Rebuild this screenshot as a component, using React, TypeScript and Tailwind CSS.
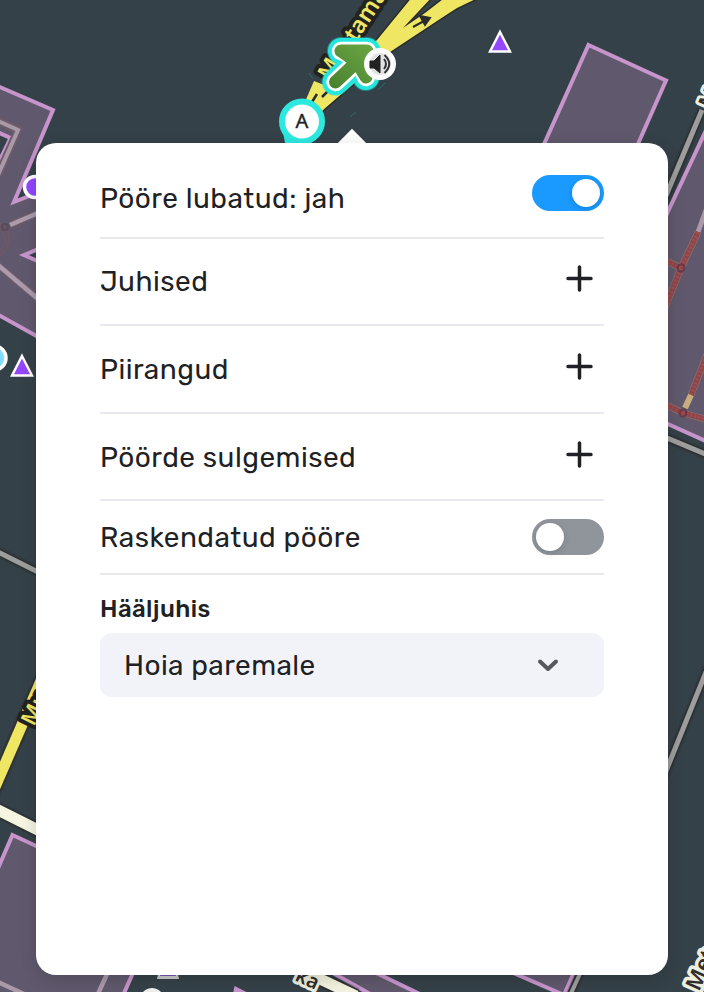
import React from "react";

function Triangle({ x, y }: { x: number; y: number }) {
  return (
    <path
      d={`M${x} ${y + 3}L${x + 10} ${y + 22.5}H${x - 10}Z`}
      fill="#9546ff"
      stroke="#fff"
      strokeWidth="2.4"
    />
  );
}

function Road({ d, w = 5, color = "#9d9d9d", casing = "#2b2e2f" }: { d: string; w?: number; color?: string; casing?: string }) {
  return (
    <g fill="none">
      <path d={d} stroke={casing} strokeWidth={w + 6} opacity="0.3" />
      <path d={d} stroke={casing} strokeWidth={w + 3} opacity="0.7" />
      <path d={d} stroke={color} strokeWidth={w} />
    </g>
  );
}

function Track({ d }: { d: string }) {
  return (
    <g fill="none">
      <path d={d} stroke="#8c6a66" strokeWidth="7" />
      <path d={d} stroke="#7a4650" strokeWidth="5" />
      <path d={d} stroke="#a04a4d" strokeWidth="4" strokeDasharray="3 1" />
    </g>
  );
}

function StreetMap() {
  const building = { fill: "#60586c", stroke: "#c794cb", strokeWidth: 4 };
  const yellowLabel = {
    fill: "#efe663",
    stroke: "#222321",
    strokeWidth: 8,
    paintOrder: "stroke",
    strokeLinejoin: "round" as const,
    fontWeight: 600,
    fontSize: 22,
  };
  const creamLabel = {
    fill: "#2e2e2c",
    stroke: "#eeeedd",
    strokeWidth: 6,
    paintOrder: "stroke",
    strokeLinejoin: "round" as const,
    fontWeight: 600,
    fontSize: 22,
  };
  return (
    <svg className="absolute inset-0 font-['Noto_Sans',sans-serif]" width="704" height="992" viewBox="0 0 704 992">
      <defs>
        <linearGradient id="leaf" gradientUnits="userSpaceOnUse" x1="335" y1="88" x2="372" y2="45">
          <stop offset="0" stopColor="#4a832f" />
          <stop offset="1" stopColor="#6ba644" />
        </linearGradient>
      </defs>
      <rect width="704" height="992" fill="#354148" />

      {/* west building */}
      <path d="M-5 85L53 110L14 202L60 184V240L24 255L60 271V349L-5 313Z" {...building} />
      <path d="M-5 131L10.500 138L-4 168Z" fill="#354148" stroke="#c794cb" strokeWidth="4" />
      <g fill="none">
        <path d="M-2 121L18 130L-2 175" stroke="#6e5c69" strokeWidth="8" />
        <path d="M-2 121L18 130L-2 175" stroke="#a999a9" strokeWidth="4" />
        <path d="M10 225L38 213M-2 265L38 299" stroke="#6e5c69" strokeWidth="7" />
        <path d="M10 225L38 213M-2 265L38 299" stroke="#ab9bad" strokeWidth="4.500" />
        <circle cx="-9" cy="239" r="18" stroke="#6f5763" strokeWidth="2" />
        <circle cx="-9" cy="239" r="14" stroke="#6f5763" strokeWidth="1.500" />
        <circle cx="5" cy="227" r="3" stroke="#513f4e" strokeWidth="2" opacity="0.6" />
      </g>
      <circle cx="35" cy="187" r="10.500" fill="#9546ff" stroke="#fff" strokeWidth="3.500" />
      <circle cx="-6" cy="358" r="12" fill="#80dcff" stroke="#fff" strokeWidth="3.500" />
      <Triangle x={22} y={353} />

      {/* north-east and east buildings */}
      <path d="M588.500 45L666 80.500L630 162H536Z" {...building} />
      <Road d="M702 110L660 210" />
      <path d="M708 126L650 250V416L708 442V126Z" {...building} />
      <path d="M708 205L698 232" stroke="#a999a9" strokeWidth="5" />
      <Track d="M698 232L681 268L664 310" />
      <Track d="M664 260L681 268" />
      <Track d="M708 352L691 395" />
      <path d="M691 395L685 408" stroke="#c8ad7e" strokeWidth="6" />
      <Track d="M664 404L683 413L708 420" />
      <g fill="none" stroke="#5c2f40" strokeWidth="2" opacity="0.7">
        <circle cx="681" cy="268" r="3.500" />
        <circle cx="683" cy="413" r="3.500" />
      </g>
      <Road d="M660 435L710 456" />
      <text transform="translate(712 110) rotate(-67)" {...creamLabel}>M</text>
      <Road d="M708 667L660 786" />

      {/* western roads */}
      <Road d="M-4 551L44 575" />
      <Road d="M44 674L-8 794" w={11} color="#efe663" />
      <text transform="translate(34 727) rotate(-64)" {...yellowLabel}>Mu</text>
      <Road d="M-6 808L50 836" w={11} color="#f5f5e2" />
      <path d="M12.500 835L163 905L121 1000H-8V882Z" {...building} />
      <g stroke="#a999a9" strokeWidth="4.500">
        <path d="M-2 982L24 994M108 972L97 996" />
      </g>
      <path d="M159 970H177L179 979H157Z" fill="#c8cbcb" />
      <path d="M162 970H174L176 976H160Z" fill="#7950b4" />
      <circle cx="152" cy="1000" r="12" fill="#eee" />

      {/* southern edge */}
      <path d="M233 1004L236 989L262 1002Z" {...building} />
      <path d="M324 968L372 995L426 997L370 970Z" {...building} />
      <path d="M502 968L564 995L576 968Z" {...building} />
      <Road d="M584 965L568 1000" w={4} />
      <Road d="M280 960L356 996" w={11} color="#f3f3df" />
      <text transform="translate(294 980) rotate(25)" {...creamLabel} fontSize={20}>ka</text>
      <path d="M710 972L698 998H712Z" {...building} />
      <text transform="translate(699 992) rotate(-66)" {...creamLabel} strokeWidth={7}>Met</text>

      {/* main road with fork */}
      <path
        d="M377 40L413 -4H433L403 28L425 13L447 -4H482L457 8L440 19L390 52L323 110L300 146L289 143L304 103Z"
        fill="#efe663"
        stroke="#292c29"
        strokeWidth="3"
        paintOrder="stroke"
      />
      <path d="M413 27L424 21M420 16L430 18L425 25Z" fill="#292c29" stroke="#292c29" strokeWidth="2" />
      <text transform="translate(330 81) rotate(-60)" {...yellowLabel}>M</text>
      <path d="M304 104L314 81L332 88L323 110Z" fill="#efe663" />
      <path d="M312 102L317 94M322 97L330 89" stroke="#292c29" strokeWidth="2.500" />
      <text transform="translate(356 43) rotate(-57)" {...yellowLabel} fontSize={23}>tamäe</text>
      <path d="M309 73L313 79M378 90L385 83M350 117L356 112" stroke="#267f83" strokeWidth="1" opacity="0.7" />

      {/* turn arrow */}
      <g fill="none" strokeLinecap="round" strokeLinejoin="round">
        <path d="M335.500 82L360 59M341 51H367L366 77M341 51L360 59L366 77" stroke="#24e6df" strokeWidth="28" opacity="0.4" />
        <path d="M335.500 82L360 59M341 51H367L366 77M341 51L360 59L366 77" stroke="#24e6df" strokeWidth="26" />
        <path d="M335.500 82L360 59M341 51H367L366 77M341 51L360 59L366 77" stroke="#fff" strokeWidth="18.500" />
        <path d="M335.500 82L360 59M341 51H367L366 77L357 62Z" stroke="url(#leaf)" strokeWidth="13" />
        <path d="M341 51H367L366 77L357 62Z" fill="url(#leaf)" />
      </g>

      {/* voice badge */}
      <circle cx="380" cy="64" r="16" fill="#fff" />
      <circle cx="380" cy="64" r="11" fill="#b8b8b8" opacity="0.4" />
      <path d="M370 61H374L380 55V73L374 68H370Z" fill="#222" stroke="#222" strokeLinejoin="round" />
      <path d="M384 59Q388 64 384 69M384.500 55Q394 64 384.500 73" fill="none" stroke="#333" strokeWidth="2" />

      {/* node A */}
      <path d="M283 132L286 148H306L318 136Z" fill="#2ce8df" />
      <circle cx="302" cy="121.500" r="20" fill="#fff" stroke="#2ce8df" strokeWidth="6" />
      <text x="302" y="128" textAnchor="middle" fontSize="20" fill="#202124" stroke="#202124" strokeWidth="0.400">A</text>
      <Triangle x={500} y={29} />
    </svg>
  );
}

function Toggle({ on }: { on: boolean }) {
  return (
    <button
      className={`flex h-9 w-[72px] shrink-0 items-center rounded-full p-1 ${on ? "justify-end bg-[#1a9aff]" : "justify-start bg-[#90959c]"}`}
    >
      <span className="size-7 rounded-full bg-white shadow-[0_2px_6px_rgba(0,0,0,0.15)]" />
    </button>
  );
}

function Plus() {
  return (
    <svg className="mr-[11px] shrink-0" width="27" height="27" viewBox="0 0 27 27" stroke="#202124" strokeWidth="3.500" strokeLinecap="round">
      <path d="M13.500 2V25M2 13.500H25" />
    </svg>
  );
}

export default function App() {
  const row = "flex items-start justify-between border-b-2 border-[#e8e9ee]";
  return (
    <div className="relative flex h-[992px] w-[704px] overflow-hidden font-[Rubik,Roboto,sans-serif] text-[28px] leading-8 text-[#202124]">
      <StreetMap />
      <div className="absolute left-[342px] top-[133px] size-5 rotate-45 bg-white" />
      <main className="relative mx-9 mt-[143px] h-[832px] w-[632px] rounded-[20px] bg-white px-16 shadow-[0_4px_16px_rgba(0,0,0,0.16)]">
        <div className={`${row} h-24 pt-8`}>
          <span className="mt-2 tracking-[0.48px]">Pööre lubatud: jah</span>
          <Toggle on />
        </div>
        <div className={`${row} h-[87px] pt-[26px]`}>
          <span className="mt-px tracking-[0.48px]">Juhised</span>
          <Plus />
        </div>
        <div className={`${row} h-[88px] pt-[27px]`}>
          <span className="mt-px tracking-[0.48px]">Piirangud</span>
          <Plus />
        </div>
        <div className={`${row} h-[87px] pt-[27px]`}>
          <span className="mt-px tracking-[0.48px]">Pöörde sulgemised</span>
          <Plus />
        </div>
        <div className={`${row} h-[74px] pt-[18px]`}>
          <span className="mt-[3px] tracking-[0.48px]">Raskendatud pööre</span>
          <Toggle on={false} />
        </div>
        <div className="mt-5 text-2xl font-medium leading-7 tracking-[0.4px]">Hääljuhis</div>
        <button className="mt-2.5 flex h-16 w-full items-center justify-between rounded-xl bg-[#f2f3f8] pl-6 pr-11">
          <span className="mt-0.5 tracking-[0.42px]">Hoia paremale</span>
          <svg width="24" height="24" viewBox="0 0 24 24" fill="none" stroke="#55595e" strokeWidth="4" strokeLinecap="round" strokeLinejoin="round">
            <path d="M4 8.500L12 16L20 8.500" />
          </svg>
        </button>
      </main>
    </div>
  );
}
